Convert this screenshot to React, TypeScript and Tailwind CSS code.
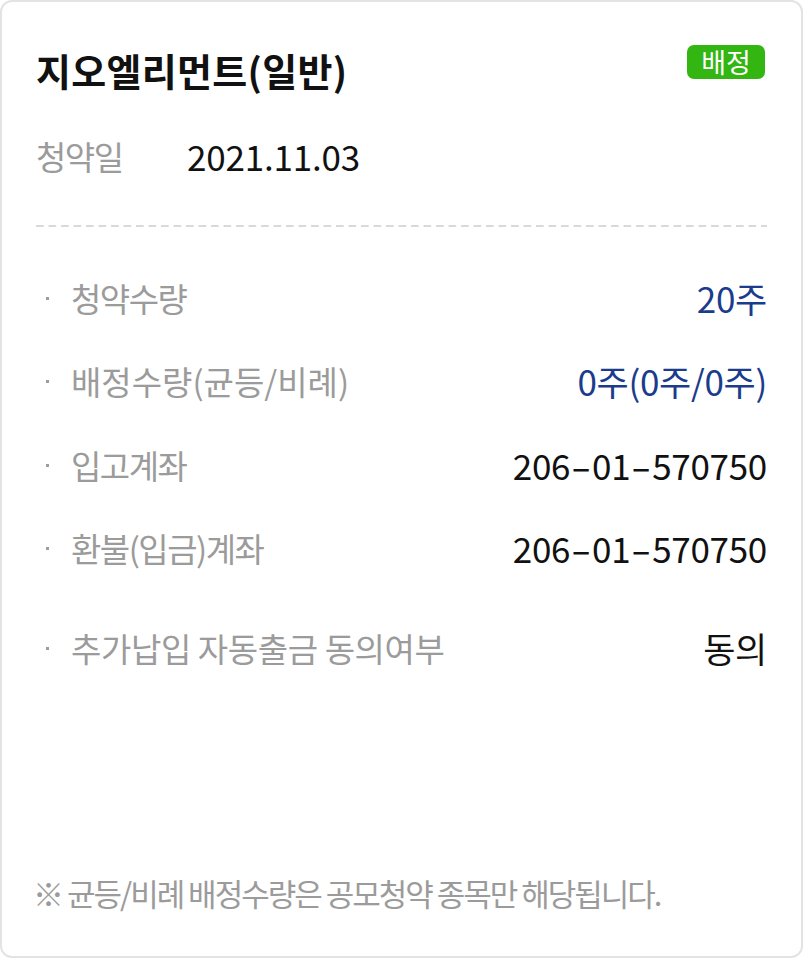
import React from "react";

const font = { fontFamily: '"Noto Sans CJK KR", "Noto Sans", sans-serif' };

function Dash() {
  return <span className="inline-block mx-[5px] scale-x-[1.7]">-</span>;
}

function Account() {
  return (
    <>
      206<Dash />01<Dash />570750
    </>
  );
}

function Row({ label, value, blue, className, labelClass }: { label: string; value: React.ReactNode; blue?: boolean; className?: string; labelClass?: string }) {
  return (
    <div className={"flex items-center justify-between h-[40px] " + (className ?? "")}>
      <div className="flex items-center">
        <div className="w-[3px] h-[3px] bg-[#9d9d9d] ml-[10px] mr-[22px]" />
        <span className={"text-[33px] leading-[40px] text-[#9b9b9b] " + (labelClass ?? "tracking-[-1.5px]")}>{label}</span>
      </div>
      <span className={"text-[35px] leading-[40px] tracking-[-0.3px] " + (blue ? "text-[#1b3c8c]" : "text-[#111111]")}>{value}</span>
    </div>
  );
}

export default function App() {
  return (
    <div style={font} className="w-[803px] h-[958px] bg-white">
      <div className="w-full h-full border-2 border-[#e3e3e3] rounded-[12px] px-[34px] flex flex-col">
        <div className="flex justify-between items-start mt-[43px]">
          <span className="mt-[5px] text-[38px] leading-[40px] font-bold text-[#111111] tracking-[0.3px]">지오엘리먼트(일반)</span>
          <span className="mr-[2px] w-[78px] h-[34px] rounded-[7px] bg-[#33b512] text-white text-[27px] leading-[34px] text-center">배정</span>
        </div>
        <div className="flex items-center mt-[46px] h-[40px]">
          <span className="text-[33px] leading-[40px] text-[#9b9b9b] tracking-[-1.5px] w-[151px]">청약일</span>
          <span className="text-[35px] leading-[40px] text-[#111111] tracking-[-0.2px]">2021.11.03</span>
        </div>
        <div className="mt-[49px] h-[2px] bg-[linear-gradient(to_right,#d9d9d9_8px,transparent_8px)] bg-[length:12.5px_2px]" />
        <div className="flex flex-col">
          <Row className="mt-[51px]" label="청약수량" value="20주" blue />
          <Row className="mt-[43px]" label="배정수량(균등/비례)" labelClass="tracking-[0px]" value="0주(0주/0주)" blue />
          <Row className="mt-[44px]" label="입고계좌" value={<Account />} />
          <Row className="mt-[43px]" label="환불(입금)계좌" value={<Account />} />
          <Row className="mt-[60px]" label="추가납입 자동출금 동의여부" labelClass="tracking-[-0.4px]" value="동의" />
        </div>
        <div className="mt-[205px] -ml-[3px] text-[31px] leading-[40px] text-[#9b9b9b] tracking-[-2px]">※ 균등/비례 배정수량은 공모청약 종목만 해당됩니다.</div>
      </div>
    </div>
  );
}
